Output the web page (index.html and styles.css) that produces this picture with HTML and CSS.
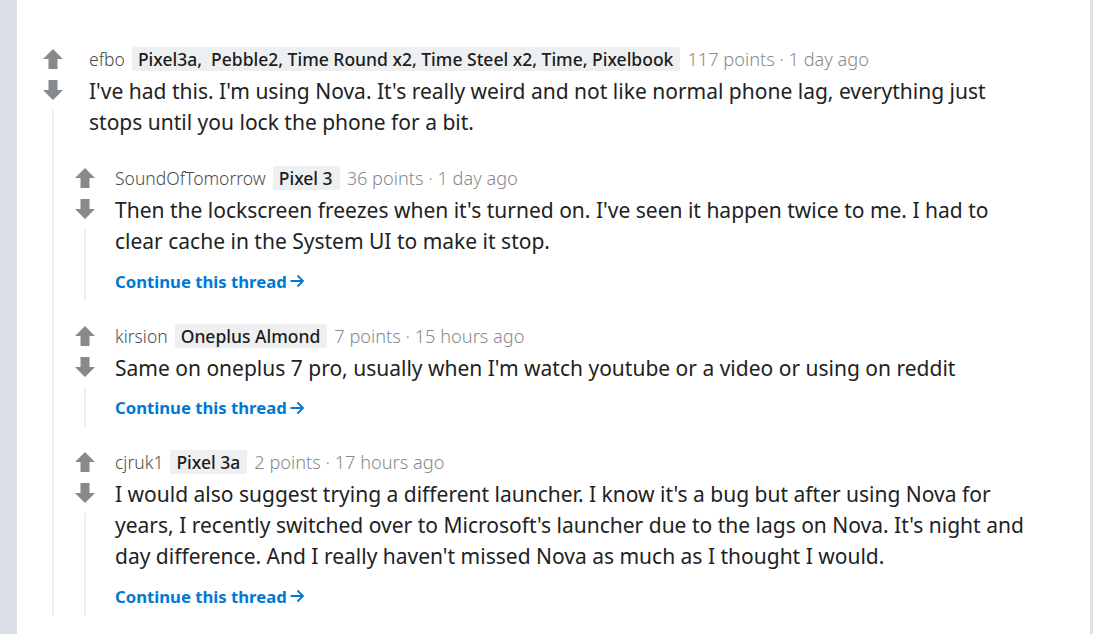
FILE: index.html
```html
<!DOCTYPE html>
<html>
<head>
<meta charset="utf-8">
<link rel="stylesheet" href="styles.css">
</head>
<body>
<div class="card">
  <div class="comment top">
    <div class="rail">
      <svg class="vote" viewBox="0 0 20 20"><path d="M10 0 L20 10 L14.5 10 L14.5 20 L5.5 20 L5.5 10 L0 10 Z"/></svg>
      <svg class="vote down" viewBox="0 0 20 20"><path d="M10 20 L20 10 L14.5 10 L14.5 0 L5.5 0 L5.5 10 L0 10 Z"/></svg>
      <div class="line"></div>
    </div>
    <div class="main">
      <div class="meta"><span class="author">efbo</span><span class="flair">Pixel3a,&nbsp; Pebble2, Time Round x2, Time Steel x2, Time, Pixelbook</span><span class="stats">117 points · 1 day ago</span></div>
      <p class="body">I've had this. I'm using Nova. It's really weird and not like normal phone lag, everything just stops until you lock the phone for a bit.</p>
      <div class="replies">
        <div class="comment">
          <div class="rail">
            <svg class="vote" viewBox="0 0 20 20"><path d="M10 0 L20 10 L14.5 10 L14.5 20 L5.5 20 L5.5 10 L0 10 Z"/></svg>
            <svg class="vote down" viewBox="0 0 20 20"><path d="M10 20 L20 10 L14.5 10 L14.5 0 L5.5 0 L5.5 10 L0 10 Z"/></svg>
            <div class="line"></div>
          </div>
          <div class="main">
            <div class="meta"><span class="author">SoundOfTomorrow</span><span class="flair">Pixel 3</span><span class="stats">36 points · 1 day ago</span></div>
            <p class="body">Then the lockscreen freezes when it's turned on. I've seen it happen twice to me. I had to clear cache in the System UI to make it stop.</p>
            <a class="more" href="#">Continue this thread<svg viewBox="0 0 16 16"><path d="M1.5 8 H14 M8.5 2.5 L14 8 L8.5 13.5"/></svg></a>
          </div>
        </div>
        <div class="comment">
          <div class="rail">
            <svg class="vote" viewBox="0 0 20 20"><path d="M10 0 L20 10 L14.5 10 L14.5 20 L5.5 20 L5.5 10 L0 10 Z"/></svg>
            <svg class="vote down" viewBox="0 0 20 20"><path d="M10 20 L20 10 L14.5 10 L14.5 0 L5.5 0 L5.5 10 L0 10 Z"/></svg>
            <div class="line"></div>
          </div>
          <div class="main">
            <div class="meta"><span class="author">kirsion</span><span class="flair">Oneplus Almond</span><span class="stats">7 points · 15 hours ago</span></div>
            <p class="body">Same on oneplus 7 pro, usually when I'm watch youtube or a video or using on reddit</p>
            <a class="more" href="#">Continue this thread<svg viewBox="0 0 16 16"><path d="M1.5 8 H14 M8.5 2.5 L14 8 L8.5 13.5"/></svg></a>
          </div>
        </div>
        <div class="comment">
          <div class="rail">
            <svg class="vote" viewBox="0 0 20 20"><path d="M10 0 L20 10 L14.5 10 L14.5 20 L5.5 20 L5.5 10 L0 10 Z"/></svg>
            <svg class="vote down" viewBox="0 0 20 20"><path d="M10 20 L20 10 L14.5 10 L14.5 0 L5.5 0 L5.5 10 L0 10 Z"/></svg>
            <div class="line"></div>
          </div>
          <div class="main">
            <div class="meta"><span class="author">cjruk1</span><span class="flair">Pixel 3a</span><span class="stats">2 points · 17 hours ago</span></div>
            <p class="body">I would also suggest trying a different launcher. I know it's a bug but after using Nova for years, I recently switched over to Microsoft's launcher due to the lags on Nova. It's night and day difference. And I really haven't missed Nova as much as I thought I would.</p>
            <a class="more" href="#">Continue this thread<svg viewBox="0 0 16 16"><path d="M1.5 8 H14 M8.5 2.5 L14 8 L8.5 13.5"/></svg></a>
          </div>
        </div>
      </div>
    </div>
  </div>
</div>
</body>
</html>
```

FILE: styles.css
```css
html, body {
  margin: 0;
  padding: 0;
  background: #dae0e6;
  height: 100%;
  overflow: hidden;
}
.card {
  margin-left: 17px;
  width: 1073px;
  min-height: 634px;
  background: #ffffff;
  box-sizing: border-box;
  padding: 47px 60px 0 24px;
  font-family: "Noto Sans", sans-serif;
  color: #1c1c1c;
}
.comment {
  display: flex;
  align-items: stretch;
}
.rail {
  width: 24px;
  flex: none;
  display: flex;
  flex-direction: column;
  align-items: center;
}
.vote {
  width: 20px;
  height: 20px;
  fill: #878a8c;
  margin-top: 2px;
}
.vote.down {
  margin-top: 11px;
}
.line {
  flex: 1;
  width: 2px;
  background: #edeff1;
  margin-top: 10px;
}
.main {
  flex: 1;
  min-width: 0;
  margin-left: 18px;
}
.top > .main {
  margin-left: 24px;
}
.meta {
  display: flex;
  align-items: center;
  height: 24px;
  font-size: 17.5px;
  white-space: nowrap;
}
.author {
  color: #4a4d4f;
  font-weight: 300;
}
.flair {
  background: #edeff1;
  color: #1c1c1c;
  font-weight: 500;
  padding: 0 7px 0 6px;
  margin: 0 7px 0 7px;
  border-radius: 2px;
  line-height: 24px;
}
.stats {
  color: #878a8c;
  font-weight: 300;
  font-size: 18.2px;
}
.body {
  margin: 5px 0 0;
  font-size: 21px;
  line-height: 31px;
  color: #222222;
}
.replies {
  margin-left: -16px;
  margin-top: 28px;
  display: flex;
  flex-direction: column;
  gap: 23px;
}
.replies .main {
  padding-bottom: 8px;
}
.more {
  display: inline-flex;
  align-items: center;
  margin-top: 13px;
  height: 22px;
  color: #0079d3;
  font-weight: 700;
  font-size: 16.7px;
  text-decoration: none;
}
.more svg {
  width: 16px;
  height: 16px;
  margin-left: 2px;
  fill: none;
  stroke: #0079d3;
  stroke-width: 1.8;
}
```
